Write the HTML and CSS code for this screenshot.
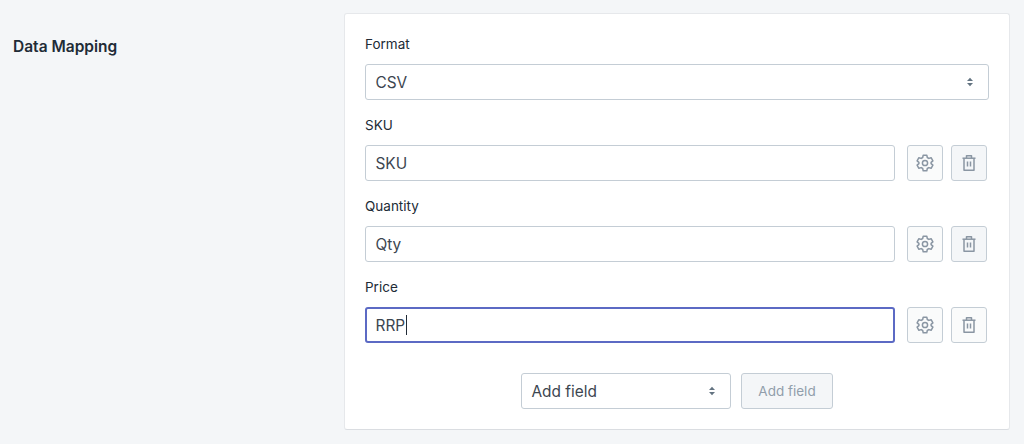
FILE: index.html
```html
<!DOCTYPE html>
<html lang="en">
<head>
<meta charset="utf-8">
<title>Data Mapping</title>
<link rel="stylesheet" href="styles.css">
</head>
<body>
<main class="section">
  <h2 class="section-title">Data Mapping</h2>
  <div class="card">
    <div class="field">
      <label class="label">Format</label>
      <div class="control select-control">
        <span>CSV</span>
        <svg class="updown" viewBox="0 0 8 10"><path d="M4 .8 7 4H1z"/><path d="M4 9.2 1 6h6z"/></svg>
      </div>
    </div>
    <div class="field">
      <label class="label">SKU</label>
      <div class="row">
        <div class="control grow"><span>SKU</span></div>
        <button class="icon-btn" type="button"><svg class="icon" viewBox="0 0 20 20"><use href="#gear"/></svg></button>
        <button class="icon-btn muted" type="button"><svg class="icon" viewBox="0 0 20 20"><use href="#trash"/></svg></button>
      </div>
    </div>
    <div class="field">
      <label class="label">Quantity</label>
      <div class="row">
        <div class="control grow"><span>Qty</span></div>
        <button class="icon-btn" type="button"><svg class="icon" viewBox="0 0 20 20"><use href="#gear"/></svg></button>
        <button class="icon-btn muted" type="button"><svg class="icon" viewBox="0 0 20 20"><use href="#trash"/></svg></button>
      </div>
    </div>
    <div class="field">
      <label class="label">Price</label>
      <div class="row">
        <div class="control grow focused"><span>RRP</span><i class="caret"></i></div>
        <button class="icon-btn" type="button"><svg class="icon" viewBox="0 0 20 20"><use href="#gear"/></svg></button>
        <button class="icon-btn" type="button"><svg class="icon" viewBox="0 0 20 20"><use href="#trash"/></svg></button>
      </div>
    </div>
    <div class="add-row">
      <div class="control select-control add-select">
        <span>Add field</span>
        <svg class="updown" viewBox="0 0 8 10"><path d="M4 .8 7 4H1z"/><path d="M4 9.2 1 6h6z"/></svg>
      </div>
      <button class="add-btn" type="button" disabled>Add field</button>
    </div>
  </div>
</main>
<svg class="defs" width="0" height="0" aria-hidden="true">
  <defs>
    <g id="gear" fill="none" stroke="currentColor" stroke-width="1.5" stroke-linejoin="round">
      <circle cx="10" cy="10" r="2.6"/>
      <path d="M8.2 2.200h3.600l.5 2.300 1.500.9 2.300-.7 1.800 3.100-1.800 1.500v1.400l1.800 1.500-1.800 3.100-2.300-.7-1.500.9-.5 2.300H8.200l-.5-2.300-1.500-.9-2.300.7-1.800-3.100 1.800-1.500V9.300L2.100 7.800l1.800-3.100 2.300.7 1.500-.9z"/>
    </g>
    <g id="trash" fill="none" stroke="currentColor" stroke-width="1.5" stroke-linejoin="round">
      <path d="M3.500 5.200h13"/>
      <path d="M7.500 5V2.800h5V5"/>
      <path d="M5 5.200v12h10v-12"/>
      <path d="M8.500 8.500v5M11.500 8.500v5"/>
    </g>
  </defs>
</svg>
</body>
</html>
```
FILE: styles.css
```css
* {
  box-sizing: border-box;
}
html, body {
  margin: 0;
  height: 100%;
}
body {
  background: #f4f6f8;
  color: #212b36;
  font-family: Inter, "Liberation Sans", sans-serif;
  overflow: hidden;
}
.section {
  display: flex;
  align-items: flex-start;
  padding: 13px 14px 0 13px;
}
.section-title {
  width: 331px;
  flex: none;
  margin: 24px 0 0;
  font-size: 15.5px;
  line-height: 20px;
  font-weight: 600;
}
.card {
  width: 666px;
  height: 417px;
  padding: 20px 20px 0;
  background: #fff;
  border: 1px solid #e6e8eb;
  border-bottom-color: #dadde1;
  border-radius: 3px;
}
.field {
  margin-bottom: 15px;
}
.label {
  display: block;
  font-size: 13.5px;
  line-height: 20px;
  margin-bottom: 10px;
  color: #212b36;
}
.row {
  display: flex;
  gap: 12px;
  padding-right: 2px;
}
.control {
  display: flex;
  align-items: center;
  justify-content: space-between;
  height: 36px;
  padding: 0 9px 0 9.5px;
  font-size: 15.4px;
  color: #3c4650;
  background: #fff;
  border: 1px solid #c4cdd5;
  border-radius: 3px;
}
.grow {
  flex: 1;
  justify-content: flex-start;
}
.focused {
  border: 2px solid #5c6ac4;
  padding: 0 8px 0 8.5px;
}
.caret {
  width: 1px;
  height: 20px;
  margin-left: 1px;
  background: #212b36;
}
.updown {
  width: 8px;
  height: 10px;
  fill: #637381;
  margin-right: 5px;
}
.icon-btn {
  width: 36px;
  height: 36px;
  padding: 0;
  display: flex;
  align-items: center;
  justify-content: center;
  color: #8a96a3;
  background: #fafbfb;
  border: 1px solid #c4cdd5;
  border-radius: 3px;
}
.icon-btn + .icon-btn {
  margin-left: -4px;
}
.muted {
  background: #f4f6f8;
}
.icon {
  width: 20px;
  height: 20px;
}
.add-row {
  display: flex;
  justify-content: center;
  gap: 10px;
  margin-top: 30px;
}
.add-select {
  width: 210px;
}
.add-btn {
  width: 92px;
  height: 36px;
  padding: 0;
  font-family: inherit;
  font-size: 13.5px;
  color: #919eab;
  background: #f4f6f8;
  border: 1px solid #c4cdd5;
  border-radius: 3px;
}
.defs {
  position: absolute;
}
```
